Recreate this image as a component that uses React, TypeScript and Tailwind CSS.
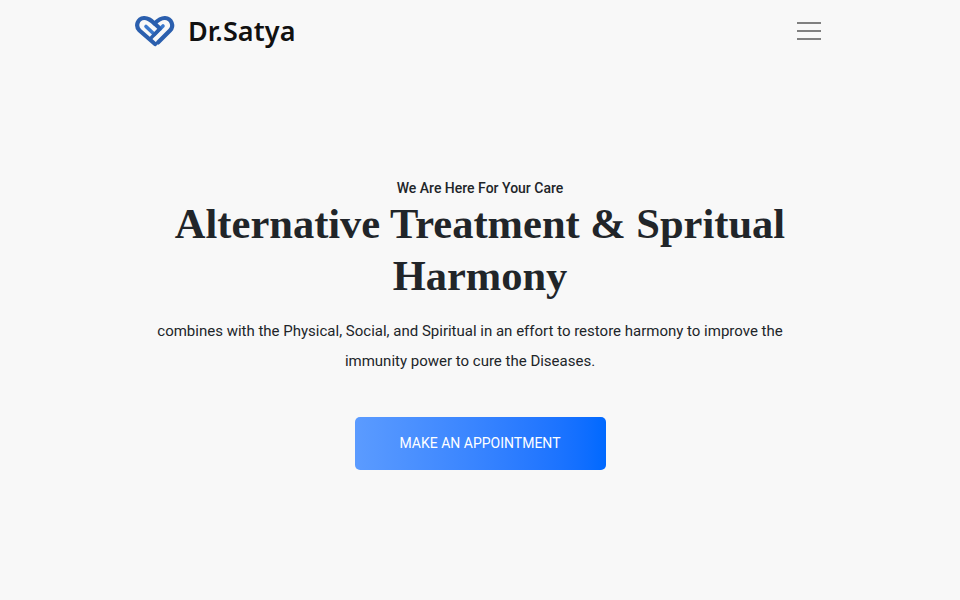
export default function App() {
  return (
    <div className="min-h-[600px] bg-[#f8f8f8] font-['Roboto',sans-serif] text-[#212529] overflow-hidden">
      <header className="mx-auto flex h-[62px] w-[690px] items-center justify-between">
        <div className="flex items-center gap-[13px]">
          <svg width="41" height="32" viewBox="1 0 41 32" fill="none" className="-mt-px">
            <path d="M21 29 L5.5 15.5 C1 11 3.5 3.5 10 3 C14 2.8 16.5 5 20.5 8.5 L26 13.5" stroke="#2b5fae" strokeWidth="4.2" strokeLinecap="round" strokeLinejoin="round" />
            <path d="M20.5 8.5 C24 5 27 2.8 31 3 C37.5 3.5 40.5 11 36 15.5 L24 27.5" stroke="#2b5fae" strokeWidth="4.2" strokeLinecap="round" strokeLinejoin="round" />
            <path d="M12 11.5 L20.5 19.5 L29 11" stroke="#3a78cc" strokeWidth="3.6" strokeLinecap="round" strokeLinejoin="round" />
            <path d="M26 13.5 L17.5 22.5" stroke="#2b5fae" strokeWidth="3.4" strokeLinecap="round" />
          </svg>
          <span className="-mt-[1px] -ml-px font-['Noto_Sans',sans-serif] text-[27px] font-semibold leading-none tracking-[0.1px] text-[#111]">Dr.Satya</span>
        </div>
        <button aria-label="Menu" className="mr-[4px] flex h-[20px] w-[24px] flex-col justify-between py-px">
          <span className="block h-[2px] w-full bg-[#808080]" />
          <span className="block h-[2px] w-full bg-[#808080]" />
          <span className="block h-[2px] w-full bg-[#808080]" />
        </button>
      </header>
      <main className="mx-auto mt-[116px] flex w-[690px] flex-col items-center text-center">
        <p className="text-[14px] font-medium leading-[21px]">We Are Here For Your Care</p>
        <h1 className="-mt-px font-['Liberation_Serif',serif] text-[42.5px] font-bold leading-[52px] text-[#212529]">
          Alternative Treatment &amp; Spritual Harmony
        </h1>
        <p className="mt-[14px] mr-[20px] w-[640px] text-[15px] leading-[30px]">
          combines with the Physical, Social, and Spiritual in an effort to restore harmony to improve the immunity power to cure the Diseases.
        </p>
        <button className="mt-[41px] h-[53px] w-[251px] rounded-[5px] bg-gradient-to-r from-[#5b9bff] to-[#0069ff] text-[14px] text-white">
          MAKE AN APPOINTMENT
        </button>
      </main>
    </div>
  );
}
